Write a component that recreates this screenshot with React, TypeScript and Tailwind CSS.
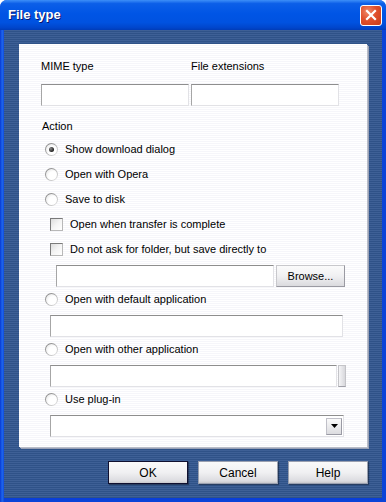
import React from "react";

const font = { fontFamily: '"Liberation Sans", Arial, sans-serif' };

function Radio({ checked = false }: { checked?: boolean }) {
  return (
    <span className="flex h-[13px] w-[13px] shrink-0 items-center justify-center rounded-full bg-[linear-gradient(135deg,#7a7a7a_0%,#a8a8a8_45%,#ececec_100%)]">
      <span className="flex h-[11px] w-[11px] items-center justify-center rounded-full bg-[radial-gradient(circle_at_65%_65%,#ffffff_0%,#ffffff_45%,#dcdcdc_100%)]">
        {checked && (
          <span className="h-[5px] w-[5px] rounded-full bg-[radial-gradient(circle_at_35%_35%,#8a8a8a_0%,#1e1e1e_70%)]" />
        )}
      </span>
    </span>
  );
}

function Check() {
  return (
    <span className="h-[13px] w-[13px] shrink-0 border border-t-[#7a7a7a] border-l-[#7a7a7a] border-r-[#b8b8b8] border-b-[#b8b8b8] bg-[linear-gradient(135deg,#dcdcdc_0%,#f4f4f4_50%,#ffffff_100%)]" />
  );
}

function Field({ className = "" }: { className?: string }) {
  return (
    <div
      className={
        "h-[22px] border border-t-[#8e8e8e] border-l-[#a6a6a6] border-r-[#e2e2e6] border-b-[#e2e2e6] bg-white " +
        className
      }
    />
  );
}

function Btn({ label, def = false }: { label: string; def?: boolean }) {
  return (
    <div
      className={
        "flex h-[23px] w-[80px] items-center justify-center text-[12px] text-black bg-[linear-gradient(to_bottom,#fafafa_0%,#f0f0f2_50%,#dcdce0_90%,#c8c8cc_100%)] " +
        (def
          ? "border border-[#101030] shadow-[1px_1px_1px_rgba(0,0,0,0.35)]"
          : "border border-[#9aa0b0] shadow-[1px_1px_1px_rgba(0,0,0,0.35)]")
      }
    >
      {label}
    </div>
  );
}

export default function App() {
  return (
    <div className="h-[502px] w-[386px] bg-white" style={font}>
      <div className="flex h-[502px] w-[386px] flex-col overflow-hidden rounded-t-[7px] bg-[linear-gradient(to_right,#0838d0_0px,#1c62ea_2px,#1c62ea_3px,#0a44d8_4px)]">
        {/* Title bar */}
        <div className="flex h-[30px] shrink-0 items-center justify-between bg-[linear-gradient(to_bottom,#3d8ff8_0%,#0c5fe8_12%,#0055e5_45%,#0052e0_75%,#0046cc_92%,#003cb8_100%)] pl-[8px] pr-[4px]">
          <span className="text-[13px] font-bold text-white [text-shadow:1px_1px_0_#0a1870]">
            File type
          </span>
          <div className="flex h-[21px] w-[22px] items-center justify-center rounded-[3px] border border-white bg-[radial-gradient(circle_at_35%_30%,#f08a6a_0%,#e0502c_45%,#c83c18_100%)]">
            <svg width="12" height="12" viewBox="0 0 12 12">
              <path d="M2 2 L10 10 M10 2 L2 10" stroke="white" strokeWidth="2.2" strokeLinecap="square" />
            </svg>
          </div>
        </div>

        {/* Body */}
        <div className="mx-[4px] mb-[4px] flex flex-1 flex-col bg-[repeating-linear-gradient(to_bottom,#3e6096_0px,#3e6096_1px,#2f5288_1px,#2f5288_2px)] pt-[14px] shadow-[0_2px_0_#0a3fd8]">
          {/* Panel */}
          <div className="mx-[15px] flex h-[403px] flex-col bg-[repeating-linear-gradient(to_bottom,#ffffff_0px,#ffffff_1px,#f6f6fa_1px,#f6f6fa_2px)] pl-[22px] pt-[16px] text-[11px] leading-[13px] text-black shadow-[1px_1px_0_#b8bcc8,2px_2px_0_#9aa2b6]">
            <div className="flex gap-[2px]">
              <div className="flex w-[148px] flex-col">
                <span>MIME type</span>
                <Field className="mt-[11px] w-[148px]" />
              </div>
              <div className="flex w-[148px] flex-col">
                <span>File extensions</span>
                <Field className="mt-[11px] w-[148px]" />
              </div>
            </div>

            <span className="mt-[14px] pl-[1px]">Action</span>

            <div className="mt-[4px] flex flex-col">
              <div className="flex h-[25px] items-center gap-[7px] pl-[4px]">
                <Radio checked />
                <span>Show download dialog</span>
              </div>
              <div className="flex h-[25px] items-center gap-[7px] pl-[4px]">
                <Radio />
                <span>Open with Opera</span>
              </div>
              <div className="flex h-[25px] items-center gap-[7px] pl-[4px]">
                <Radio />
                <span>Save to disk</span>
              </div>
              <div className="flex h-[25px] items-center gap-[7px] pl-[9px]">
                <Check />
                <span>Open when transfer is complete</span>
              </div>
              <div className="flex h-[25px] items-center gap-[7px] pl-[9px]">
                <Check />
                <span>Do not ask for folder, but save directly to</span>
              </div>
              <div className="mt-[3px] flex items-start gap-[2px] pl-[15px]">
                <Field className="w-[218px]" />
                <div className="flex h-[22px] w-[69px] items-center justify-center border border-[#c8c8cc] border-b-[#9a9aa2] border-r-[#9a9aa2] bg-[linear-gradient(to_bottom,#fbfbfb_0%,#f0f0f2_50%,#dadade_100%)] text-[11px]">
                  Browse...
                </div>
              </div>

              <div className="flex h-[25px] items-center gap-[7px] pl-[4px]">
                <Radio />
                <span>Open with default application</span>
              </div>
              <div className="mt-[3px] pl-[9px]">
                <Field className="w-[293px]" />
              </div>

              <div className="flex h-[25px] items-center gap-[7px] pl-[4px]">
                <Radio />
                <span>Open with other application</span>
              </div>
              <div className="mt-[3px] flex pl-[9px]">
                <Field className="w-[287px]" />
                <div className="ml-[1px] h-[22px] w-[8px] border border-[#c4c4c8] border-b-[#a0a0a8] bg-[linear-gradient(to_right,#f4f4f6,#d8d8dc)]" />
              </div>

              <div className="flex h-[25px] items-center gap-[7px] pl-[4px]">
                <Radio />
                <span>Use plug-in</span>
              </div>
              <div className="mt-[3px] pl-[9px]">
                <div className="flex h-[22px] w-[294px] items-center justify-end border border-t-[#8e8e8e] border-l-[#a6a6a6] border-r-[#e2e2e6] border-b-[#e2e2e6] bg-white pr-[1px]">
                  <div className="flex h-[17px] w-[16px] items-center justify-center border border-[#c0c0c8] border-b-[#9a9aa4] border-r-[#9a9aa4] bg-[linear-gradient(to_bottom,#fafafa,#dcdce0)]">
                    <svg width="7" height="4" viewBox="0 0 7 4">
                      <path d="M0 0 H7 L3.5 4 Z" fill="#000" />
                    </svg>
                  </div>
                </div>
              </div>
            </div>
          </div>

          {/* Buttons */}
          <div className="mt-[14px] flex justify-end gap-[10px] pr-[14px]">
            <Btn label="OK" def />
            <Btn label="Cancel" />
            <Btn label="Help" />
          </div>
        </div>
      </div>
    </div>
  );
}
